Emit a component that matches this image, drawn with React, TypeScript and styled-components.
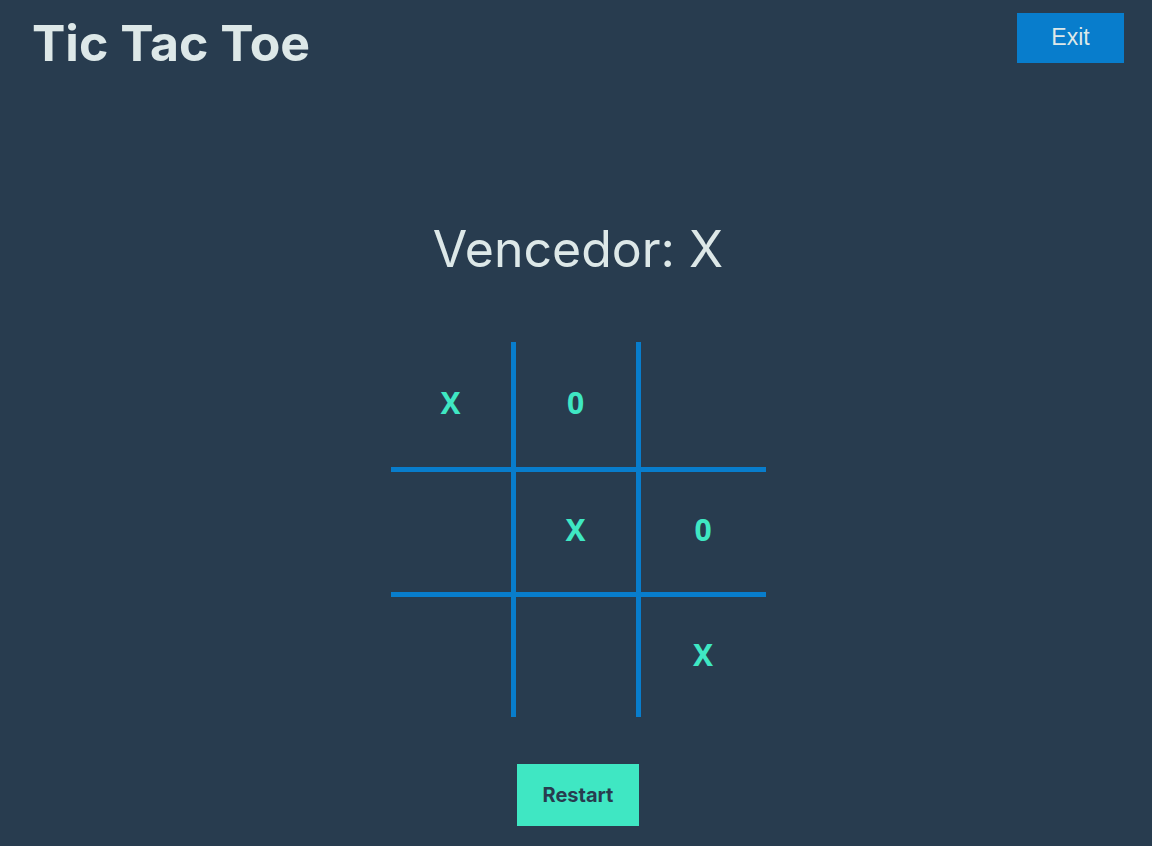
import React, { useState } from "react";
import styled, { createGlobalStyle } from "styled-components";

const GlobalStyle = createGlobalStyle`
  *, *::before, *::after { box-sizing: border-box; }
  body {
    margin: 0;
    background: #283c4f;
    color: #dde8e8;
    font-family: Inter, sans-serif;
  }
  h1, p { margin: 0; }
`;

const Page = styled.div`
  min-height: 100vh;
`;

const Header = styled.header`
  display: flex;
  justify-content: space-between;
  align-items: flex-start;
  padding: 13px 28px 0 32px;
`;

const Title = styled.h1`
  font-size: 50px;
  line-height: 60px;
  font-weight: 700;
`;

const ExitButton = styled.button`
  width: 107px;
  height: 50px;
  padding: 0 0 2px;
  border: 0;
  background: #087dcc;
  color: #dde8e8;
  font: 23px/28px "Liberation Sans", sans-serif;
  cursor: pointer;
`;

const Main = styled.main`
  display: flex;
  flex-direction: column;
  align-items: center;
  padding: 146px 0 20px 4px;
`;

const Status = styled.p`
  font-size: 50px;
  line-height: 60px;
`;

const Board = styled.div`
  display: grid;
  grid-template-columns: repeat(3, 125px);
  grid-template-rows: repeat(3, 125px);
  margin: 63px 0 47px;
`;

const Cell = styled.button<{ $right: boolean; $top: boolean }>`
  padding: 0 0 4px;
  border: 0 solid #087dcc;
  border-right-width: ${(p) => (p.$right ? 5 : 0)}px;
  border-top-width: ${(p) => (p.$top ? 5 : 0)}px;
  background: transparent;
  color: #3fe7c3;
  font: 700 30px/36px "Noto Sans", sans-serif;
  cursor: pointer;
`;

const RestartButton = styled.button`
  width: 122px;
  height: 62px;
  padding: 0;
  border: 0;
  background: #3fe7c3;
  color: #283c4f;
  font: 700 20px/24px Inter, sans-serif;
  cursor: pointer;
`;

const START = ["X", "0", "", "", "X", "0", "", "", "X"];

export default function App() {
  const [cells, setCells] = useState(START);
  return (
    <Page>
      <GlobalStyle />
      <Header>
        <Title>Tic Tac Toe</Title>
        <ExitButton type="button">Exit</ExitButton>
      </Header>
      <Main>
        <Status>Vencedor: X</Status>
        <Board>
          {cells.map((mark, i) => (
            <Cell
              key={i}
              type="button"
              aria-label={mark ? undefined : `Cell ${i + 1}`}
              $right={i % 3 < 2}
              $top={i > 2}
            >
              {mark}
            </Cell>
          ))}
        </Board>
        <RestartButton type="button" onClick={() => setCells(Array(9).fill(""))}>
          Restart
        </RestartButton>
      </Main>
    </Page>
  );
}
